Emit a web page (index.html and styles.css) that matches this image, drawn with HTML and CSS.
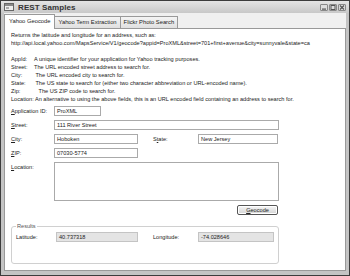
FILE: index.html
```html
<!DOCTYPE html>
<html lang="en">
<head>
  <meta charset="UTF-8">
  <title>REST Samples</title>
  <link rel="stylesheet" href="styles.css">
</head>
<body>
  <div class="window">
    <div class="titlebar">
      <svg class="appicon" width="10" height="9" viewBox="0 0 10 9">
        <rect x="0.5" y="0.5" width="9" height="7" fill="#eee" stroke="#666"/>
        <rect x="1" y="1" width="8" height="2" fill="#888"/>
        <rect x="2" y="4" width="3" height="2" fill="#aaa"/>
      </svg>
      <span class="title">REST Samples</span>
      <div class="winbtns">
        <span class="winbtn"><svg width="8" height="7" viewBox="0 0 8 7"><rect x="2" y="4.5" width="4" height="1.2" fill="#555"/></svg></span>
        <span class="winbtn"><svg width="8" height="7" viewBox="0 0 8 7"><rect x="2" y="1.5" width="4" height="4" fill="none" stroke="#555"/></svg></span>
        <span class="winbtn"><svg width="8" height="7" viewBox="0 0 8 7"><path d="M2 1.5 L6 5.5 M6 1.5 L2 5.5" stroke="#555" stroke-width="1.2"/></svg></span>
      </div>
    </div>

    <div class="tabs">
      <span class="tab active">Yahoo Geocode</span>
      <span class="tab">Yahoo Term Extraction</span>
      <span class="tab">Flickr Photo Search</span>
    </div>

    <div class="panel">
      <p class="line">Returns the latitude and longitude for an address, such as:</p>
      <p class="line nowrap">http://api.local.yahoo.com/MapsService/V1/geocode?appid=ProXML&amp;street=701+first+avenue&amp;city=sunnyvale&amp;state=ca</p>

      <div class="help">
        <p class="line"><span class="key">AppId:</span>A unique identifier for your application for Yahoo tracking purposes.</p>
        <p class="line"><span class="key">Street:</span>The URL encoded street address to search for.</p>
        <p class="line"><span class="key">City:</span> The URL encoded city to search for.</p>
        <p class="line"><span class="key">State:</span> The US state to search for (either two character abbreviation or URL-encoded name).</p>
        <p class="line"><span class="key">Zip:</span>&nbsp;&nbsp; The US ZIP code to search for.</p>
        <p class="line">Location: An alternative to using the above fields, this is an URL encoded field containing an address to search for.</p>
      </div>

      <div class="form">
        <div class="row">
          <label class="lbl"><u>A</u>pplication ID:</label>
          <span class="field w-s">ProXML</span>
        </div>
        <div class="row">
          <label class="lbl"><u>S</u>treet:</label>
          <span class="field w-l">111 River Street</span>
        </div>
        <div class="row">
          <label class="lbl"><u>C</u>ity:</label>
          <span class="field w-m">Hoboken</span>
          <label class="lbl lbl-state">S<u>t</u>ate:</label>
          <span class="field w-st">New Jersey</span>
        </div>
        <div class="row">
          <label class="lbl"><u>Z</u>IP:</label>
          <span class="field w-m">07030-5774</span>
        </div>
        <div class="row">
          <label class="lbl"><u>L</u>ocation:</label>
          <span class="field w-l area"></span>
        </div>
        <div class="actions">
          <span class="button"><u>G</u>eocode</span>
        </div>
      </div>

      <fieldset class="results">
        <legend>Results</legend>
        <div class="row">
          <label class="lbl lbl-res">Latitude:</label>
          <span class="field ro w-lat">40.737318</span>
          <label class="lbl lbl-lon">Longitude:</label>
          <span class="field ro w-lon">-74.028646</span>
        </div>
      </fieldset>
    </div>
  </div>
</body>
</html>
```

FILE: styles.css
```css
* { box-sizing: border-box; }
body {
  margin: 0;
  width: 350px;
  height: 276px;
  overflow: hidden;
  font-family: 'Liberation Sans', Arial, sans-serif;
  font-size: 5.6px;
  color: #222;
  background: #fff;
}
p { margin: 0; }
u { text-decoration: underline; }

.window {
  width: 350px;
  height: 276px;
  border: 1px solid #3c3c3c;
  background: #c4c4c4;
  display: flex;
  flex-direction: column;
  padding: 0 3px 4px 3px;
}
.titlebar {
  height: 12px;
  display: flex;
  align-items: center;
  background: linear-gradient(#e4e4e4, #c8c8c8);
  margin: 0 -3px;
  padding: 0 3px 0 3px;
}
.appicon { margin-right: 4px; }
.title {
  font-weight: bold;
  font-size: 8px;
  color: #333;
  letter-spacing: 0.1px;
}
.winbtns {
  margin-left: auto;
  display: flex;
  gap: 1px;
}
.winbtn {
  width: 8px;
  height: 7px;
  border: 1px solid #888;
  border-radius: 1px;
  background: #ddd;
  display: flex;
}
.winbtn svg { display: block; margin: -1px; }

.tabs {
  height: 15px;
  display: flex;
  align-items: flex-end;
  background: #f0f0f0;
  padding-left: 0;
}
.tab {
  height: 12px;
  line-height: 11px;
  padding: 0 3px;
  border: 1px solid #999;
  border-bottom: none;
  background: linear-gradient(#f4f4f4, #e0e0e0);
  margin-right: -1px;
  font-size: 5.8px;
}
.tab.active {
  line-height: 13px;
  background: #fff;
  padding: 0 4px;
  position: relative;
  z-index: 1;
  margin-bottom: -1px;
  height: 15px;
}

.panel {
  flex: 1;
  background: #fff;
  border: 1px solid #999;
  padding: 2px 5px 0 6px;
  overflow: hidden;
}
.line {
  line-height: 8px;
  height: 8px;
  white-space: nowrap;
}
.nowrap { overflow: hidden; }
.help { margin-top: 8px; }
.key {
  display: inline-block;
  width: 23px;
}

.form { margin-top: 3px; }
.row {
  display: flex;
  align-items: flex-start;
  margin-bottom: 4px;
}
.lbl {
  width: 43px;
  line-height: 10px;
}
.field {
  height: 10px;
  line-height: 9px;
  border: 1px solid #aaa;
  padding: 0 2px;
  background: #fff;
}
.w-s { width: 47px; }
.w-l { width: 225px; }
.w-m { width: 84px; }
.w-st { width: 80px; }
.area { height: 39px; }
.lbl-state {
  width: 60px;
  padding-left: 15px;
}

.actions {
  display: flex;
  justify-content: flex-end;
  width: 267px;
  margin-top: 2px;
}
.button {
  width: 41px;
  height: 10px;
  line-height: 8px;
  text-align: center;
  border: 1px solid #555;
  border-radius: 2px;
  background: linear-gradient(#f6f6f6, #d4d4d4);
  box-shadow: inset 0 0 0 1px #fff;
}

.results {
  margin: 8px 0 0 0;
  width: 267px;
  height: 41px;
  border: 1px solid #d0d0d0;
  border-radius: 3px;
  padding: 3px 4px 0 4px;
}
.results legend {
  padding: 0 1px;
  color: #555;
  font-size: 5.6px;
  line-height: 6px;
}
.lbl-res { width: 40px; }
.ro {
  background: #e4e4e4;
  border-color: #c4c4c4;
}
.w-lat { width: 82px; }
.lbl-lon {
  width: 60px;
  padding-left: 15px;
}
.w-lon { width: 76px; }
```
